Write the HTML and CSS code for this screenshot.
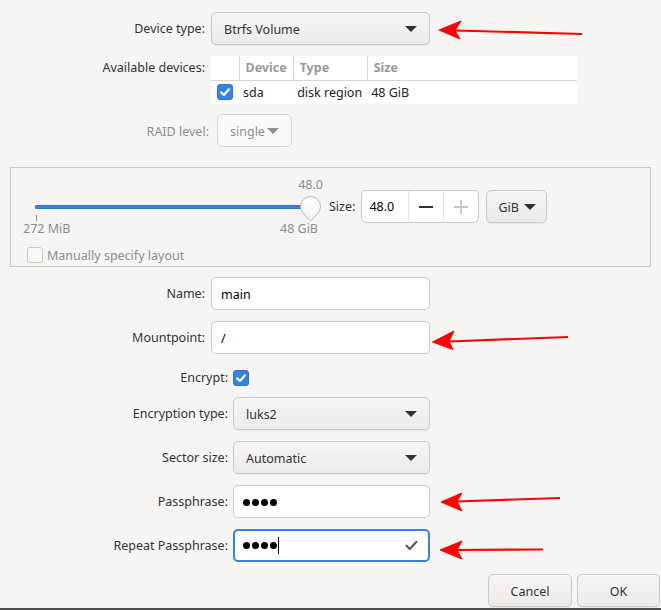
FILE: index.html
```html
<!DOCTYPE html>
<html lang="en">
<head>
    <meta charset="UTF-8">
    <title>Btrfs Volume</title>
    <link rel="stylesheet" href="styles.css">
</head>
<body>
    <div class="dialog">
        <div class="form form-top">
            <div class="field-label">Device type:</div>
            <div class="combo combo-wide"><span>Btrfs Volume</span><span class="arrow"></span></div>

            <div class="field-label label-top">Available devices:</div>
            <table class="devices">
                <thead>
                    <tr>
                        <th class="col-check"></th>
                        <th class="col-device">Device</th>
                        <th class="col-type">Type</th>
                        <th>Size</th>
                    </tr>
                </thead>
                <tbody>
                    <tr>
                        <td class="col-check">
                            <span class="checkbox checked">
                                <svg width="14" height="14" viewBox="0 0 14 14"><path d="M3.2 7.4 L5.9 10 L11 4.3" fill="none" stroke="#fff" stroke-width="2.2" stroke-linecap="round" stroke-linejoin="round"/></svg>
                            </span>
                        </td>
                        <td>sda</td>
                        <td>disk region</td>
                        <td>48 GiB</td>
                    </tr>
                </tbody>
            </table>

            <div class="field-label disabled raid-label">RAID level:</div>
            <div class="combo combo-small disabled raid-combo"><span>single</span><span class="arrow"></span></div>
        </div>

        <div class="size-frame">
            <div class="size-row">
                <div class="scale">
                    <div class="scale-value">48.0</div>
                    <div class="scale-track">
                        <div class="trough"></div>
                        <span class="tick"></span>
                        <svg class="knob" width="23" height="28" viewBox="0 0 23 28">
                            <defs>
                                <linearGradient id="knobFill" x1="0" y1="0" x2="0" y2="1">
                                    <stop offset="0" stop-color="#ffffff"/>
                                    <stop offset="1" stop-color="#f3f2f1"/>
                                </linearGradient>
                            </defs>
                            <path d="M11.5 26 L4.26 18.4 A10 10 0 1 1 18.74 18.4 Z" fill="url(#knobFill)" stroke="#bdb6b0" stroke-width="1"/>
                        </svg>
                    </div>
                    <div class="scale-marks">
                        <span>272 MiB</span>
                        <span>48 GiB</span>
                    </div>
                </div>
                <span class="size-label">Size:</span>
                <div class="spin">
                    <div class="spin-value">48.0</div>
                    <div class="spin-button"><span class="minus"></span></div>
                    <div class="spin-button"><span class="plus"></span></div>
                </div>
                <div class="button unit-button"><span>GiB</span><span class="arrow"></span></div>
            </div>
            <div class="check-row disabled">
                <span class="checkbox"></span>
                <span>Manually specify layout</span>
            </div>
        </div>

        <div class="form form-top form-names">
            <div class="field-label">Name:</div>
            <div class="entry entry-wide">main</div>

            <div class="field-label">Mountpoint:</div>
            <div class="entry entry-wide">/</div>
        </div>

        <div class="form form-bottom">
            <div class="field-label">Encrypt:</div>
            <span class="checkbox checked">
                <svg width="14" height="14" viewBox="0 0 14 14"><path d="M3.2 7.4 L5.9 10 L11 4.3" fill="none" stroke="#fff" stroke-width="2.2" stroke-linecap="round" stroke-linejoin="round"/></svg>
            </span>

            <div class="field-label">Encryption type:</div>
            <div class="combo combo-narrow"><span>luks2</span><span class="arrow"></span></div>

            <div class="field-label">Sector size:</div>
            <div class="combo combo-narrow"><span>Automatic</span><span class="arrow"></span></div>

            <div class="field-label">Passphrase:</div>
            <div class="entry entry-narrow">
                <span class="dots"><i></i><i></i><i></i><i></i></span>
            </div>

            <div class="field-label">Repeat Passphrase:</div>
            <div class="entry entry-narrow focused">
                <span class="dots"><i></i><i></i><i></i><i></i></span>
                <span class="caret"></span>
                <svg class="entry-icon" width="13" height="11" viewBox="0 0 13 11"><path d="M1.5 5.8 L4.8 9 L11.5 1.8" fill="none" stroke="#555753" stroke-width="2" stroke-linecap="round" stroke-linejoin="round"/></svg>
            </div>
        </div>

        <div class="actions">
            <div class="button action-button">Cancel</div>
            <div class="button action-button ok-button">OK</div>
        </div>

        <!-- red annotation arrows drawn over the screenshot -->
        <svg class="annotations" width="661" height="610" viewBox="0 0 661 610">
            <g fill="#ff0000" stroke="#ff0000" stroke-linejoin="round">
                <path d="M582 34 L455 30.5" stroke-width="2.2" fill="none"/>
                <polygon points="439,30 461,21 455,30.5 460,39" stroke-width="1"/>

                <path d="M568 337 L449 341.5" stroke-width="2.2" fill="none"/>
                <polygon points="432.5,342 454,331 449,341.5 453,349.5" stroke-width="1"/>

                <path d="M560 498 L457 501.5" stroke-width="2.2" fill="none"/>
                <polygon points="441,502 462,493 457,501.5 462,511" stroke-width="1"/>

                <path d="M543 549.5 L457 550" stroke-width="2.2" fill="none"/>
                <polygon points="440,550 462,541 457,550 462,559" stroke-width="1"/>
            </g>
        </svg>
    </div>
</body>
</html>
```

FILE: styles.css
```css
* {
    box-sizing: border-box;
}

body {
    margin: 0;
    background: #f6f5f4;
    font-family: 'Noto Sans', 'DejaVu Sans', sans-serif;
    font-size: 12.5px;
    color: #2e3436;
}

.dialog {
    position: relative;
    height: 610px;
    padding-top: 12px;
    border-bottom: 2px solid #4f4f4f;
    overflow: hidden;
}

.form {
    display: grid;
    align-items: center;
    row-gap: 11px;
}

.form > * {
    justify-self: start;
}

.form-top {
    grid-template-columns: 205px 1fr;
    column-gap: 6px;
}

.form-bottom {
    grid-template-columns: 228px 1fr;
    column-gap: 5px;
    margin-top: 15px;
}

.form-names {
    margin-top: 10px;
}

.field-label {
    justify-self: stretch;
    text-align: right;
    white-space: nowrap;
    line-height: 16px;
    padding-top: 1px;
}

.label-top {
    align-self: start;
    line-height: 24px;
    padding-top: 0;
}

.disabled {
    color: #8b8e8f;
}

.raid-label {
    margin-right: -4px;
}

.raid-combo {
    margin-left: 6px;
    margin-top: -1px;
}

/* combo boxes and buttons */
.combo,
.button {
    display: flex;
    align-items: center;
    height: 33px;
    padding-top: 1px;
    border: 1px solid #cdc7c2;
    border-radius: 5px;
    background: linear-gradient(#f6f5f4, #edebe9);
    box-shadow: 0 1px 1px rgba(0, 0, 0, 0.06);
    color: #2e3436;
    white-space: nowrap;
}

.combo {
    justify-content: space-between;
    padding-left: 12px;
    padding-right: 12px;
}

.combo-wide {
    width: 219px;
}

.combo-narrow {
    width: 197px;
}

.combo-small {
    width: 75px;
}

.combo.disabled {
    background: #faf9f8;
    border-color: #d6d1cd;
    box-shadow: none;
    color: #8b8e8f;
}

.arrow {
    width: 0;
    height: 0;
    border-left: 6px solid transparent;
    border-right: 6px solid transparent;
    border-top: 6px solid #2e3436;
}

.combo.disabled .arrow {
    border-top-color: #8b8e8f;
}

/* device table */
.devices {
    width: 366px;
    border-collapse: collapse;
    background: #fff;
}

.devices th {
    height: 24px;
    padding: 0 6px;
    text-align: left;
    font-weight: bold;
    color: #9a9996;
    border-bottom: 1px solid #d8d4d0;
}

.devices th + th {
    border-left: 1px solid #d8d4d0;
}

.devices td {
    height: 24px;
    padding: 0 4px;
    color: #1e1e1e;
    white-space: nowrap;
}

.devices .col-check {
    width: 28px;
    padding-left: 6px;
}

.devices .col-device {
    width: 52px;
}

.devices .col-type {
    width: 74px;
}

.devices td.col-check {
    padding: 0 0 0 6px;
}

/* checkboxes */
.checkbox {
    display: flex;
    align-items: center;
    justify-content: center;
    width: 16px;
    height: 16px;
    border: 1px solid #cdc7c2;
    border-radius: 3px;
    background: #fff;
}

.checkbox.checked {
    background: #3584e4;
    border-color: #2a76d2;
}

/* size frame */
.size-frame {
    width: 641px;
    margin: 20px 0 0 10px;
    padding: 8px 0 3px 12px;
    border: 1px solid #cdc7c2;
}

.size-row {
    display: flex;
    align-items: center;
}

.scale {
    width: 300px;
}

.scale-value {
    height: 17px;
    line-height: 17px;
    text-align: right;
    color: #8b8e8f;
}

.scale-track {
    position: relative;
    height: 28px;
    padding-top: 12px;
}

.trough {
    width: 275px;
    height: 4px;
    margin-left: 12px;
    border-radius: 2px;
    background: #3584e4;
    box-shadow: inset 0 0 0 1px #2a76d2;
}

.tick {
    position: absolute;
    left: 13px;
    top: 22px;
    width: 1px;
    height: 6px;
    background: #8b8e8f;
}

.knob {
    position: absolute;
    left: 276px;
    top: 2px;
}

.scale-marks {
    display: flex;
    justify-content: space-between;
    height: 16px;
    line-height: 16px;
    padding-right: 5px;
    color: #8b8e8f;
}

.size-label {
    margin: 0 6px;
}

.spin {
    display: flex;
    height: 33px;
    border: 1px solid #cdc7c2;
    border-radius: 5px;
    background: #fff;
}

.spin-value {
    display: flex;
    align-items: center;
    width: 46px;
    padding-left: 7px;
    color: #000;
}

.spin-button {
    display: flex;
    align-items: center;
    justify-content: center;
    width: 35px;
    border-left: 1px solid #e8e5e2;
}

.minus {
    width: 14px;
    height: 2px;
    background: #2e3436;
}

.plus {
    position: relative;
    width: 14px;
    height: 2px;
    background: #c8c6c3;
}

.plus::after {
    content: '';
    position: absolute;
    left: 6px;
    top: -6px;
    width: 2px;
    height: 14px;
    background: #c8c6c3;
}

.unit-button {
    gap: 5px;
    width: 61px;
    margin-left: 7px;
    padding-left: 11px;
}

.check-row {
    display: flex;
    align-items: center;
    gap: 4px;
    height: 16px;
    margin: 10px 0 0 4px;
}

.check-row .checkbox {
    background: #faf9f8;
}

/* text entries */
.entry {
    display: flex;
    align-items: center;
    height: 33px;
    padding: 1px 9px 0;
    border: 1px solid #cdc7c2;
    border-radius: 5px;
    background: #fff;
    color: #000;
}

.entry-wide {
    width: 219px;
}

.entry-narrow {
    width: 197px;
}

.entry.focused {
    border: 2px solid #3584e4;
    padding: 0 8px;
}

.dots {
    display: flex;
    gap: 2px;
}

.dots i {
    width: 7px;
    height: 7px;
    border-radius: 50%;
    background: #000;
}

.caret {
    width: 1px;
    height: 17px;
    margin-left: 1px;
    background: #000;
}

.entry-icon {
    margin-left: auto;
    margin-right: 2px;
}

/* dialog buttons */
.actions {
    display: flex;
    justify-content: flex-end;
    gap: 5px;
    margin-top: 12px;
    padding-right: 1px;
}

.action-button {
    justify-content: center;
    width: 84px;
}

.ok-button {
    width: 83px;
}

.annotations {
    position: absolute;
    left: 0;
    top: 0;
    pointer-events: none;
}
```
